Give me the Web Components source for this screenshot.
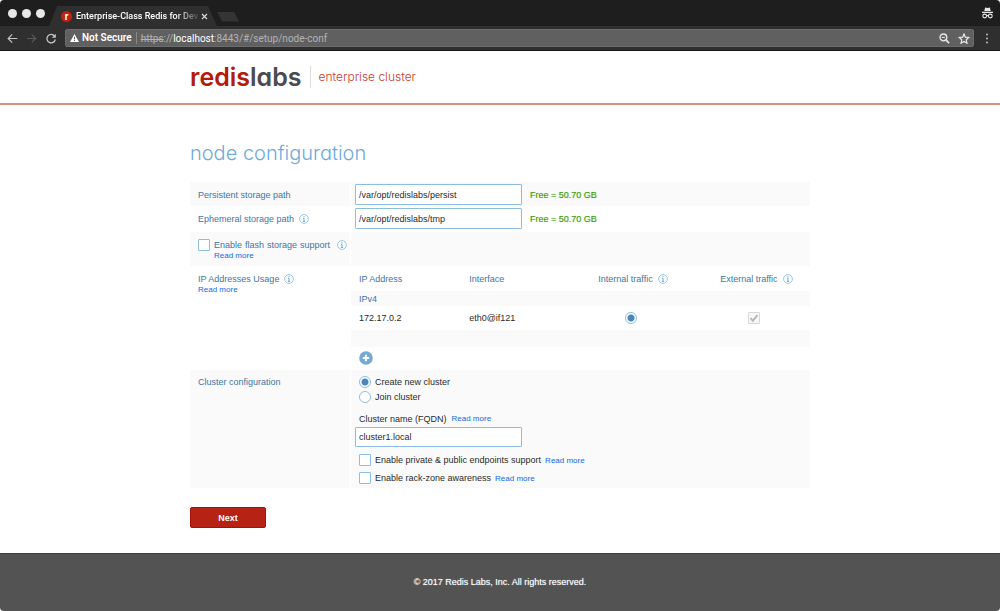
<!DOCTYPE html>
<html lang="en">
<head>
<meta charset="utf-8">
<title>Enterprise-Class Redis for Developers</title>
<style>
  html { background: #fff; }
  body { margin: 0; font: 9px/12px "Liberation Sans", Arial, sans-serif; color: #2a2a2a; }
</style>
</head>
<body>
<setup-window></setup-window>

<template id="t-setup-window">
  <style>
    :host { display: flex; flex-direction: column; min-height: 100vh; border-radius: 4px; overflow: hidden; }
    .bar { flex: none; }
    main { flex: 1; width: 100%; max-width: 620px; box-sizing: border-box; margin: 0 auto; padding: 34px 0 25px; }
    h1 { margin: 0 0 15px; font: 300 20px/28px Inter, "Open Sans", sans-serif; font-feature-settings: "cv11"; color: #70aadb; }
    .path { display: flex; align-items: center; gap: 8px; padding: 2px 0 0 4px; }
    .free { color: #469a0c; text-shadow: 0 0 1px #a5d283; }
    .label { display: flex; align-items: center; gap: 5px; }
    .flash { display: flex; align-items: center; gap: 7px; height: 12px; }
    .flash check-field { width: 132px; --justify: justify; }
    .indent { padding-left: 16px; }
    a { display: block; font-size: 8px; line-height: 9px; color: #1168e8; text-decoration: none; }
    .cluster { padding: 4px 0 0 8px; }
    .line { display: flex; align-items: center; gap: 4px; height: 18px; }
    .name { display: flex; align-items: center; gap: 5px; height: 17px; }
    .cluster .fqdn { margin: 0 0 4px -4px; }
    text-box { display: block; width: 167px; }
    button { display: block; width: 76px; height: 21px; margin: 19px 0 0; padding: 0; border: 1px solid #a51207; border-radius: 2px; background: #b62213; color: #fff; font: bold 9px/12px "Liberation Sans", Arial, sans-serif; }
  </style>
  <browser-bar class="bar"></browser-bar>
  <site-header class="bar"></site-header>
  <main>
    <h1>node configuration</h1>
    <config-row shaded style="--row: 24px">
      <span slot="label" class="label">Persistent storage path</span>
      <div class="path"><text-box name="Persistent storage path" value="/var/opt/redislabs/persist"></text-box><span class="free">Free = 50.70 GB</span></div>
    </config-row>
    <config-row style="--row: 26px">
      <span slot="label" class="label">Ephemeral storage path <info-icon></info-icon></span>
      <div class="path"><text-box name="Ephemeral storage path" value="/var/opt/redislabs/tmp"></text-box><span class="free">Free = 50.70 GB</span></div>
    </config-row>
    <config-row shaded style="--row: 34px">
      <div slot="label">
        <div class="flash"><check-field>Enable flash storage support</check-field><info-icon></info-icon></div>
        <a class="indent" href="#flash">Read more</a>
      </div>
    </config-row>
    <config-row style="--row: 104px">
      <div slot="label"><span class="label">IP Addresses Usage <info-icon></info-icon></span><a href="#ip">Read more</a></div>
      <ip-table></ip-table>
    </config-row>
    <config-row shaded style="--row: 118px; --pad: 6px">
      <span slot="label">Cluster configuration</span>
      <div class="cluster">
        <cluster-choice></cluster-choice>
        <div class="name"><span>Cluster name (FQDN)</span><a href="#fqdn">Read more</a></div>
        <text-box class="fqdn" name="Cluster name (FQDN)" value="cluster1.local"></text-box>
        <div class="line"><check-field>Enable private &amp; public endpoints support</check-field><a href="#endpoints">Read more</a></div>
        <div class="line"><check-field>Enable rack-zone awareness</check-field><a href="#rack">Read more</a></div>
      </div>
    </config-row>
    <button type="button">Next</button>
  </main>
  <site-footer class="bar"></site-footer>
</template>

<template id="t-browser-bar">
  <style>
    :host { display: block; font-family: Roboto, Inter, sans-serif; color: #fff; background: #1e1e1e; }
    svg { display: block; flex: none; }
    .tabs { display: flex; height: 26px; padding: 0 6px 0 8px; align-items: center; }
    .lights { display: flex; gap: 5px; flex: none; }
    .lights i { width: 9px; height: 9px; border-radius: 50%; background: #e8e8e8; }
    .tab { display: flex; align-items: center; align-self: flex-end; width: 168px; height: 20px; margin-left: 4px; padding: 0 9px 0 12px; box-sizing: border-box; background: #2f2f2f; clip-path: polygon(8px 0, 159px 0, 100% 100%, 0 100%); }
    .title { flex: 1; margin: 0 0 0 4px; font-size: 9px; font-weight: 500; line-height: 12px; white-space: nowrap; -webkit-mask-image: linear-gradient(90deg, #000 80%, transparent); mask-image: linear-gradient(90deg, #000 80%, transparent); }
    .fav { flex: none; width: 11px; height: 11px; border-radius: 50%; background: #c4200f; font-size: 10px; line-height: 11px; font-weight: 700; text-align: center; }
    .new { width: 22px; height: 10px; background: #343434; clip-path: polygon(0 0, 17px 0, 100% 100%, 5px 100%); margin: 7px 0 0; }
    .spy { margin-left: auto; }
    .tools { display: flex; align-items: center; height: 25px; box-sizing: border-box; padding: 0 9px 0 7px; gap: 8px; background: #2f2f2f; border-bottom: 1px solid #161616; }
    .address { flex: 1; display: flex; align-items: center; height: 18px; box-sizing: border-box; padding: 0 3px 0 4px; background: #606060; border: 1px solid #6c6c6c; border-radius: 2px; font-size: 10px; line-height: 14px; }
    .warn { font-weight: 600; margin: 0 4px 0 3px; }
    .url { flex: 1; border-left: 1px solid #888; padding-left: 4px; height: 12px; line-height: 13px; color: #b4b4b4; }
    .url b { color: #fff; font-weight: 400; }
    .more { margin-left: 1px; }
    .star { margin-left: 8px; }
  </style>
  <div class="tabs">
    <div class="lights"><i></i><i></i><i></i></div>
    <div class="tab">
      <span class="fav">r</span><span class="title">Enterprise-Class Redis for Dev</span>
      <svg width="7" height="7" viewBox="0 0 7 7"><path d="M1 1l5 5M6 1l-5 5" stroke="#ddd" stroke-width="1.1"/></svg>
    </div>
    <div class="new"></div>
    <svg class="spy" width="13" height="12" viewBox="0 0 13 12"><path d="M3.3 4l.8-3.4 2.4.5 2.4-.5.8 3.4z" fill="#e8e8e8"/><path d="M1 5.4h11" stroke="#e8e8e8" stroke-width="1.2"/><g fill="none" stroke="#e8e8e8" stroke-width="1.1"><circle cx="3.7" cy="9" r="1.9"/><circle cx="9.3" cy="9" r="1.9"/><path d="M5.5 8.6h2"/></g></svg>
  </div>
  <div class="tools">
    <svg width="11" height="11" viewBox="0 0 11 11"><path d="M10.3 5.5H1.5M5.2 1.4L1.1 5.5l4.1 4.1" fill="none" stroke="#c4c4c4" stroke-width="1.2"/></svg>
    <svg width="11" height="11" viewBox="0 0 11 11"><path d="M1 5.5h8.5M5.8 1.6l3.9 3.9-3.9 3.9" fill="none" stroke="#5c5c5c" stroke-width="1.1"/></svg>
    <svg width="12" height="11" viewBox="0 0 12 11"><path d="M9.6 3.2A4.2 4.2 0 1 0 10.3 6.5" fill="none" stroke="#c4c4c4" stroke-width="1.3"/><path d="M10.8.7v4h-4z" fill="#c4c4c4"/></svg>
    <div class="address">
      <svg width="9" height="8" viewBox="0 0 9 8"><path d="M4.5 0L9 8H0z" fill="#fff"/><path d="M4.5 2.8v2.5M4.5 6v1" stroke="#606060"/></svg>
      <span class="warn">Not Secure</span>
      <span class="url"><s>https</s>://<b>localhost</b>:8443/#/setup/node-conf</span>
      <svg width="11" height="11" viewBox="0 0 11 11"><circle cx="4.4" cy="4.4" r="3.4" fill="none" stroke="#e8e8e8" stroke-width="1.3"/><path d="M2.8 4.4H6" stroke="#e8e8e8"/><path d="M6.9 6.9l3.2 3.2" stroke="#e8e8e8" stroke-width="1.7"/></svg>
      <svg class="star" width="12" height="11" viewBox="0 0 12 11"><path d="M6 1l1.3 3.2 3.5.3-2.6 2.3.8 3.4-3-1.8-3 1.8.8-3.4L1.2 4.5l3.5-.3z" fill="none" stroke="#e8e8e8" stroke-width="1.2"/></svg>
    </div>
    <svg class="more" width="8" height="11" viewBox="0 0 8 11" fill="#bbb"><circle cx="4" cy="1.5" r="1"/><circle cx="4" cy="5.5" r="1"/><circle cx="4" cy="9.5" r="1"/></svg>
  </div>
</template>

<template id="t-site-header">
  <style>
    :host { display: block; background: #fff; border-bottom: 2px solid #dc8d80; }
    .inner { display: flex; align-items: center; max-width: 620px; height: 52px; margin: 0 auto; font-family: Inter, "Open Sans", sans-serif; font-feature-settings: "cv11"; }
    .logo { font-size: 25px; line-height: 30px; font-weight: 600; color: #4b4b4d; }
    .logo span { color: #b31b0b; }
    .sub { margin-left: 8px; padding-left: 8px; border-left: 1px solid #ddd; font-size: 12px; line-height: 22px; font-weight: 300; color: #c43a2c; }
  </style>
  <div class="inner"><div class="logo"><span>redis</span>labs</div><div class="sub">enterprise cluster</div></div>
</template>

<template id="t-site-footer">
  <style>
    :host { display: block; padding: 23px 0; background: #535353; border-top: 1px solid #3e3e3e; color: #fff; text-align: center; line-height: 11px; text-shadow: 0 0 1px #bbb; }
  </style>
  © 2017 Redis Labs, Inc. All rights reserved.
</template>

<template id="t-config-row">
  <style>
    :host { display: grid; grid-template-columns: 160px 1fr; column-gap: 1px; min-height: var(--row); }
    .label { padding: var(--pad, 7px) 0 0 8px; color: #3f75a3; }
    :host([shaded]) > div { background: #fafafa; }
  </style>
  <div class="label"><slot name="label"></slot></div>
  <div><slot></slot></div>
</template>

<template id="t-info-icon">
  <style>:host { display: inline-flex; } svg { display: block; }</style>
  <svg width="10" height="10" viewBox="0 0 10 10"><circle cx="5" cy="5" r="4.4" fill="#fff" stroke="#8fbfe6" stroke-width=".9"/><path d="M5 2.1v1.2M4.1 4.4H5v3M3.9 7.4h2.2" fill="none" stroke="#5f9fd2" stroke-width=".9"/></svg>
</template>

<template id="t-text-box">
  <style>
    input { display: block; width: 100%; height: 21px; box-sizing: border-box; margin: 0; padding: 0 3px; border: 1px solid #8dbde2; border-radius: 1px; background: #fff; color: #2a2a2a; font: inherit; outline: 0; }
    :host(.fqdn) input { height: 20px; }
  </style>
  <input type="text">
</template>

<template id="t-check-field">
  <style>
    :host { display: block; }
    label { display: flex; align-items: center; gap: 4px; }
    span { flex: 1; white-space: nowrap; text-align-last: var(--justify, start); }
    input { flex: none; appearance: none; width: 12px; height: 12px; margin: 0; border: 1px solid #8dbde2; border-radius: 1px; background: #fff; }
  </style>
  <label><input type="checkbox"><span><slot></slot></span></label>
</template>

<template id="t-cluster-choice">
  <style>
    :host { display: block; margin-bottom: 6px; }
    label { display: flex; align-items: center; gap: 4px; height: 15px; }
    input { appearance: none; width: 12px; height: 12px; margin: 0; border: 1px solid #8dbde2; border-radius: 50%; background: #fff; }
    input:checked { background: radial-gradient(circle, #4a86ba 3px, #fff 4px); }
  </style>
  <label><input type="radio" name="mode" checked>Create new cluster</label>
  <label><input type="radio" name="mode">Join cluster</label>
</template>

<template id="t-ip-table">
  <style>
    :host { display: block; }
    table { width: 100%; table-layout: fixed; border-collapse: collapse; }
    th, td { box-sizing: border-box; padding: 0 0 0 8px; text-align: left; font-weight: 400; }
    th { color: #3f75a3; }
    tr > :nth-child(3) { padding: 0; text-align: center; }
    tr > :nth-child(4) { text-align: center; }
    .a { width: 24%; } .b { width: 26%; }
    .head { height: 25px; }
    .group { height: 15px; background: #fafafa; }
    .entry { height: 24px; }
    .end { height: 17px; background: #fafafa; }
    .cap { display: inline-flex; align-items: center; gap: 5px; padding-left: 4px; vertical-align: middle; }
    input { appearance: none; display: block; width: 12px; height: 12px; margin: 0 auto; border: 1px solid #8dbde2; border-radius: 50%; background: radial-gradient(circle, #4a86ba 3px, #fff 4px); }
    .tick { display: grid; width: 12px; margin: 0 auto; }
    .tick > * { grid-area: 1 / 1; }
    .tick input { border-color: #d8d8d8; border-radius: 1px; background: #f7f7f7; }
    button { display: block; margin: 4px 0 0 8px; padding: 0; border: 0; background: none; }
    svg { display: block; }
  </style>
  <table>
    <thead><tr class="head"><th class="a">IP Address</th><th class="a">Interface</th><th class="b"><span class="cap">Internal traffic <info-icon></info-icon></span></th><th><span class="cap">External traffic <info-icon></info-icon></span></th></tr></thead>
    <tbody>
      <tr class="group"><th colspan="4">IPv4</th></tr>
      <tr class="entry"><td>172.17.0.2</td><td>eth0@if121</td><td><input type="radio" name="internal" aria-label="Internal traffic" checked></td><td><div class="tick"><input type="checkbox" aria-label="External traffic" checked disabled><svg width="12" height="12" viewBox="0 0 12 12"><path d="M2.6 6.2l2.2 2.6 4.6-5.6" fill="none" stroke="#b5b5b5" stroke-width="1.9"/></svg></div></td></tr>
      <tr class="end"><td colspan="4"></td></tr>
    </tbody>
  </table>
  <button type="button" aria-label="Add address"><svg width="14" height="14" viewBox="0 0 14 14"><circle cx="7" cy="7" r="6.8" fill="#76a9d6"/><path d="M7 3.8v6.4M3.8 7h6.4" stroke="#fff" stroke-width="1.8"/></svg></button>
</template>

<script>
  class Part extends HTMLElement {
    constructor() {
      super();
      const template = document.getElementById('t-' + this.localName);
      this.attachShadow({ mode: 'open' }).append(template.content.cloneNode(true));
    }
  }
  class TextBox extends Part {
    connectedCallback() {
      const input = this.shadowRoot.querySelector('input');
      input.value = this.getAttribute('value') || '';
      input.setAttribute('aria-label', this.getAttribute('name') || '');
    }
  }
  customElements.define('text-box', TextBox);
  for (const name of ['info-icon', 'check-field', 'cluster-choice', 'ip-table', 'config-row',
                      'browser-bar', 'site-header', 'site-footer', 'setup-window']) {
    customElements.define(name, class extends Part {});
  }
</script>
</body>
</html>
